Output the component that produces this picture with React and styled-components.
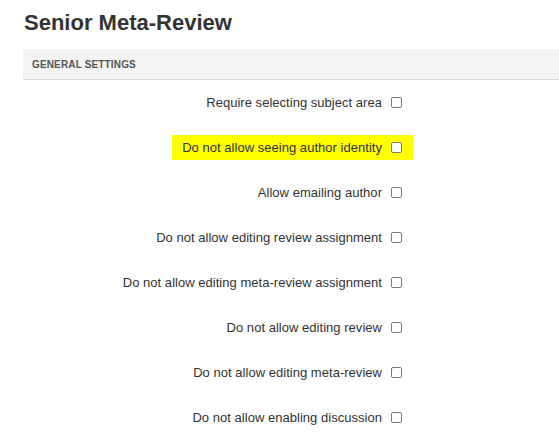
import styled, { createGlobalStyle } from 'styled-components'

const GlobalStyle = createGlobalStyle`
	body {
		margin: 0;
		background: #fff;
		font-family: 'Liberation Sans', Arial, sans-serif;
		color: #333;
	}
`

const options = [
	{ label: 'Require selecting subject area' },
	{ label: 'Do not allow seeing author identity', highlight: true },
	{ label: 'Allow emailing author' },
	{ label: 'Do not allow editing review assignment' },
	{ label: 'Do not allow editing meta-review assignment' },
	{ label: 'Do not allow editing review' },
	{ label: 'Do not allow editing meta-review' },
	{ label: 'Do not allow enabling discussion' },
]

const App = () => {
	return (
		<>
			<GlobalStyle />
			<Page>
				<Title>Senior Meta-Review</Title>
				<SectionHeader>General Settings</SectionHeader>
				<Form>
					{options.map((item, index) => (
						<Row key={index}>
							<Option $highlight={item.highlight}>
								<span>{item.label}</span>
								<Checkbox type='checkbox' />
							</Option>
						</Row>
					))}
				</Form>
			</Page>
		</>
	)
}
export default App

const Page = styled.div`
	padding-left: 23px;
	overflow: hidden;
`

const Title = styled.h1`
	margin: 10px 0 14px 1px;
	font-size: 22px;
	line-height: 25px;
	font-weight: bold;
	color: #333;
`

const SectionHeader = styled.div`
	height: 30px;
	display: flex;
	align-items: center;
	padding-left: 9px;
	background: #f4f4f4;
	border-bottom: 1px solid #dedede;
	text-transform: uppercase;
	font-size: 10px;
	font-weight: bold;
	letter-spacing: 0.15px;
	color: #555;
`

const Form = styled.div`
	display: flex;
	flex-direction: column;
	width: 390px;
`

const Row = styled.div`
	height: 45px;
	display: flex;
	align-items: center;
	justify-content: flex-end;
`

const Option = styled.label`
	display: inline-flex;
	align-items: center;
	gap: 9px;
	height: 25px;
	padding: 0 11px 0 10px;
	background: ${(p) => (p.$highlight ? '#ffff00' : 'transparent')};
	font-size: 13px;
	letter-spacing: 0.03px;
	color: #333;
`

const Checkbox = styled.input`
	appearance: none;
	margin: 0;
	width: 11px;
	height: 11px;
	border: 1px solid #7a7a7a;
	border-radius: 2px;
	background: #fff;
	box-sizing: border-box;
`
